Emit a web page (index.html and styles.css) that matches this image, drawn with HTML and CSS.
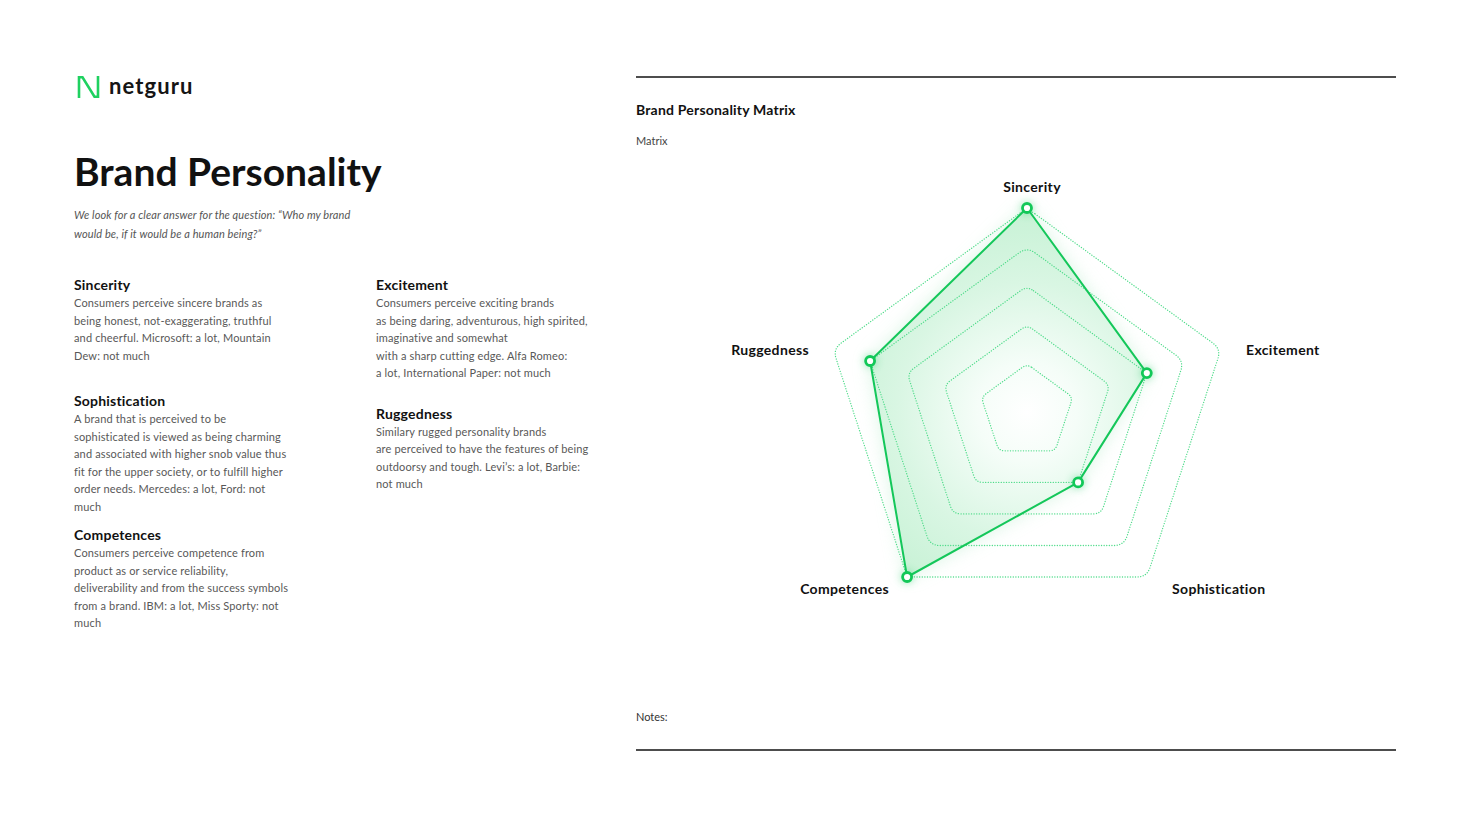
FILE: index.html
```html
<!DOCTYPE html>
<html lang="en">
<head>
<meta charset="utf-8">
<title>Brand Personality</title>
<link rel="stylesheet" href="styles.css">
</head>
<body>
<main class="page">
  <section class="left">
    <header class="brand">
      <svg class="brand-mark" viewBox="0 0 24 24" width="24" height="24" aria-hidden="true">
        <polyline points="2,23 2,2.2 5.5,2.2 17.5,21.8 21,21.8 21,1" fill="none" stroke="#1fd160" stroke-width="2.6" stroke-linejoin="miter"/>
      </svg>
      <span class="brand-name">netguru</span>
    </header>
    <h1 class="title">Brand Personality</h1>
    <p class="lead">We look for a clear answer for the question: “Who my brand<br>would be, if it would be a human being?”</p>
    <div class="traits">
      <div class="trait-col">
        <article class="trait trait-a">
          <h2 class="trait-name">Sincerity</h2>
          <p class="trait-text">Consumers perceive sincere brands as<br>being honest, not-exaggerating, truthful<br>and cheerful. Microsoft: a lot, Mountain<br>Dew: not much</p>
        </article>
        <article class="trait trait-b">
          <h2 class="trait-name">Sophistication</h2>
          <p class="trait-text">A brand that is perceived to be<br>sophisticated is viewed as being charming<br>and associated with higher snob value thus<br>fit for the upper society, or to fulfill higher<br>order needs. Mercedes: a lot, Ford: not<br>much</p>
        </article>
        <article class="trait">
          <h2 class="trait-name">Competences</h2>
          <p class="trait-text">Consumers perceive competence from<br>product as or service reliability,<br>deliverability and from the success symbols<br>from a brand. IBM: a lot, Miss Sporty: not<br>much</p>
        </article>
      </div>
      <div class="trait-col">
        <article class="trait trait-c">
          <h2 class="trait-name">Excitement</h2>
          <p class="trait-text">Consumers perceive exciting brands<br>as being daring, adventurous, high spirited,<br>imaginative and somewhat<br>with a sharp cutting edge. Alfa Romeo:<br>a lot, International Paper: not much</p>
        </article>
        <article class="trait">
          <h2 class="trait-name">Ruggedness</h2>
          <p class="trait-text">Similary rugged personality brands<br>are perceived to have the features of being<br>outdoorsy and tough. Levi’s: a lot, Barbie:<br>not much</p>
        </article>
      </div>
    </div>
  </section>

  <section class="panel">
    <h2 class="panel-title">Brand Personality Matrix</h2>
    <p class="panel-sub">Matrix</p>
    <svg class="radar" viewBox="-391 -253 760 450" width="760" height="450">
      <defs>
        <radialGradient id="fillGrad" cx="0" cy="0" r="200" gradientUnits="userSpaceOnUse">
          <stop offset="0" stop-color="#ffffff"/>
          <stop offset="0.25" stop-color="#f5fdf8"/>
          <stop offset="0.65" stop-color="#d9f6e3"/>
          <stop offset="1" stop-color="#c8f2d6"/>
        </radialGradient>
        <filter id="glow" x="-30%" y="-30%" width="160%" height="160%">
          <feGaussianBlur stdDeviation="9"/>
        </filter>
      </defs>

      <polygon class="data-glow" points="0,-204 119.8,-38.9 51.1,70.4 -119.9,165 -156.9,-51" filter="url(#glow)"/>
      <polygon class="data-fill" points="0,-204 119.8,-38.9 51.1,70.4 -119.9,165 -156.9,-51"/>

      <g class="rings">
        <path d="M8.09,-198.12 L185.91,-68.88 Q194,-63 190.91,-53.49 L122.99,155.49 Q119.9,165 109.9,165 L-109.9,165 Q-119.9,165 -122.99,155.49 L-190.91,-53.49 Q-194,-63 -185.91,-68.88 L-8.09,-198.12 Q0,-204 8.09,-198.12 Z"/>
        <path d="M8.09,-159.12 L148.81,-56.88 Q156.9,-51 153.81,-41.49 L100.09,124 Q97,133.5 87,133.5 L-87,133.5 Q-97,133.5 -100.09,124 L-153.81,-41.49 Q-156.9,-51 -148.81,-56.88 L-8.09,-159.12 Q0,-165 8.09,-159.12 Z"/>
        <path d="M6.47,-121.3 L113.33,-43.6 Q119.8,-38.9 117.33,-31.29 L76.57,94.29 Q74.1,101.9 66.1,101.9 L-66.1,101.9 Q-74.1,101.9 -76.57,94.29 L-117.33,-31.29 Q-119.8,-38.9 -113.33,-43.6 L-6.47,-121.3 Q0,-126 6.47,-121.3 Z"/>
        <path d="M5.66,-82.89 L77.04,-31.01 Q82.7,-26.9 80.54,-20.24 L53.26,63.74 Q51.1,70.4 44.1,70.4 L-44.1,70.4 Q-51.1,70.4 -53.26,63.74 L-80.54,-20.24 Q-82.7,-26.9 -77.04,-31.01 L-5.66,-82.89 Q0,-87 5.66,-82.89 Z"/>
        <path d="M4.85,-44.47 L40.85,-18.33 Q45.7,-14.8 43.85,-9.09 L30.05,33.09 Q28.2,38.8 22.2,38.8 L-22.2,38.8 Q-28.2,38.8 -30.05,33.09 L-43.85,-9.09 Q-45.7,-14.8 -40.85,-18.33 L-4.85,-44.47 Q0,-48 4.85,-44.47 Z"/>
      </g>

      <polygon class="data-line" points="0,-204 119.8,-38.9 51.1,70.4 -119.9,165 -156.9,-51"/>

      <g class="points">
        <circle cx="0" cy="-204" r="4.5"/>
        <circle cx="119.8" cy="-38.9" r="4.5"/>
        <circle cx="51.1" cy="70.4" r="4.5"/>
        <circle cx="-119.9" cy="165" r="4.5"/>
        <circle cx="-156.9" cy="-51" r="4.5"/>
      </g>

      <g class="axis-labels">
        <text x="5" y="-220" text-anchor="middle">Sincerity</text>
        <text x="219" y="-57">Excitement</text>
        <text x="-218" y="-57" text-anchor="end">Ruggedness</text>
        <text x="-138" y="182" text-anchor="end">Competences</text>
        <text x="145" y="182">Sophistication</text>
      </g>
    </svg>
    <div class="notes">
      <p class="notes-label">Notes:</p>
    </div>
  </section>
</main>
</body>
</html>
```

FILE: styles.css
```css
* {
  box-sizing: border-box;
}

html, body {
  margin: 0;
  padding: 0;
  background: #ffffff;
}

body {
  font-family: Lato, "Noto Sans", "DejaVu Sans", sans-serif;
  color: #111111;
  width: 1470px;
  height: 827px;
  overflow: hidden;
}

.page {
  display: flex;
  padding: 0 74px;
}

/* ---------- left column ---------- */

.left {
  width: 562px;
  padding-top: 75px;
}

.brand {
  display: flex;
  align-items: center;
  gap: 8px;
  height: 24px;
  margin-left: 3px;
}

.brand-mark {
  display: block;
  flex: none;
}

.brand-name {
  font-size: 22px;
  font-weight: 700;
  letter-spacing: 1.1px;
  color: #151515;
  line-height: 24px;
  margin-top: -3px;
}

.title {
  margin: 49px 0 0;
  font-size: 39px;
  line-height: 46px;
  font-weight: 700;
  letter-spacing: 0;
  color: #111111;
}

.lead {
  margin: 11px 0 0;
  font-size: 11px;
  line-height: 19px;
  font-style: italic;
  letter-spacing: 0.1px;
  color: #555555;
}

.traits {
  display: grid;
  grid-template-columns: 302px 1fr;
  margin-top: 32px;
}

.trait-name {
  margin: 0;
  font-size: 14px;
  line-height: 19px;
  font-weight: 700;
  letter-spacing: 0.2px;
  color: #111111;
}

.trait-text {
  margin: 0;
  font-size: 11px;
  line-height: 17.5px;
  letter-spacing: 0.15px;
  color: #585858;
}

.trait-a {
  margin-bottom: 27px;
}

.trait-b {
  margin-bottom: 10px;
}

.trait-c {
  margin-bottom: 22px;
}

/* ---------- right panel ---------- */

.panel {
  width: 760px;
  margin-top: 76px;
  border-top: 2px solid #4d4d4d;
  display: flex;
  flex-direction: column;
}

.panel-title {
  margin: 22px 0 0;
  font-size: 14px;
  line-height: 20px;
  font-weight: 700;
  letter-spacing: 0.2px;
  color: #111111;
}

.panel-sub {
  margin: 13px 0 0;
  font-size: 11px;
  line-height: 16px;
  color: #444444;
}

.radar {
  display: block;
  margin-top: 10px;
  overflow: visible;
}

.rings path {
  fill: none;
  stroke: #4fdc8a;
  stroke-width: 1.3;
  stroke-dasharray: 0.1 2.5;
  stroke-linecap: round;
}

.data-glow {
  fill: #bdeecf;
  opacity: 0.6;
}

.data-fill {
  fill: url(#fillGrad);
}

.data-line {
  fill: none;
  stroke: #14c75a;
  stroke-width: 2;
  stroke-linejoin: round;
}

.points circle {
  fill: #ffffff;
  stroke: #12c858;
  stroke-width: 2.8;
  filter: drop-shadow(0 0 4px rgba(20, 200, 90, 0.45));
}

.axis-labels text {
  font-family: Lato, "Noto Sans", sans-serif;
  font-size: 14px;
  font-weight: 700;
  letter-spacing: 0.35px;
  fill: #111111;
}

.notes {
  margin-top: 100px;
  padding-bottom: 24px;
  border-bottom: 2px solid #4d4d4d;
}

.notes-label {
  margin: 0;
  font-size: 11px;
  line-height: 16px;
  color: #333333;
}
```
